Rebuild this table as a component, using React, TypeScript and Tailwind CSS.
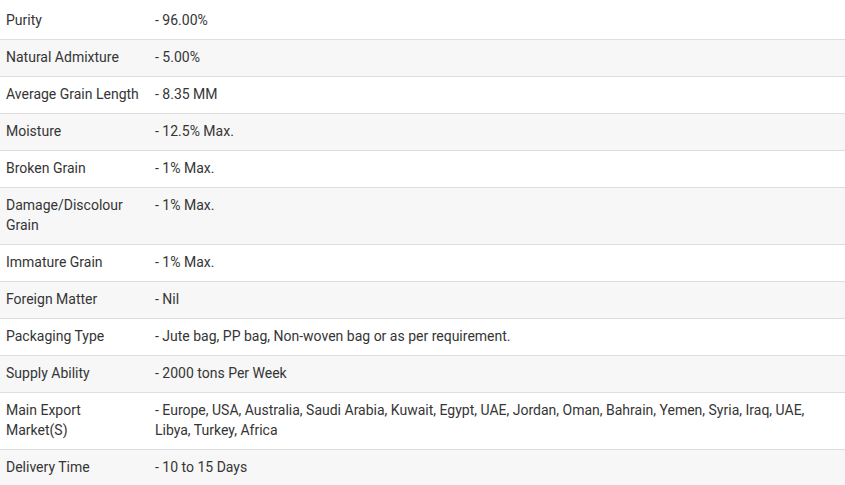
const specs: { label: string; value: string }[] = [
  { label: "Purity", value: "- 96.00%" },
  { label: "Natural Admixture", value: "- 5.00%" },
  { label: "Average Grain Length", value: "- 8.35 MM" },
  { label: "Moisture", value: "- 12.5% Max." },
  { label: "Broken Grain", value: "- 1% Max." },
  { label: "Damage/Discolour Grain", value: "- 1% Max." },
  { label: "Immature Grain", value: "- 1% Max." },
  { label: "Foreign Matter", value: "- Nil" },
  { label: "Packaging Type", value: "- Jute bag, PP bag, Non-woven bag or as per requirement." },
  { label: "Supply Ability", value: "- 2000 tons Per Week" },
  {
    label: "Main Export Market(S)",
    value:
      "- Europe, USA, Australia, Saudi Arabia, Kuwait, Egypt, UAE, Jordan, Oman, Bahrain, Yemen, Syria, Iraq, UAE, Libya, Turkey, Africa",
  },
  { label: "Delivery Time", value: "- 10 to 15 Days" },
];

export default function App() {
  return (
    <div className="w-[845px] bg-white font-['Roboto',_'Liberation_Sans',_sans-serif] text-[14px] leading-5 text-[#353535]">
      <table className="w-full border-collapse">
        <tbody>
          {specs.map((row, i) => (
            <tr
              key={row.label}
              className={`border-b border-[#dedede] ${i % 2 === 1 ? "bg-[#f7f7f7]" : "bg-white"}`}
            >
              <td
                className={`w-[149px] px-[6px] pb-[9px] align-top ${i === 0 ? "pt-[10px]" : "pt-[7px]"}`}
              >
                {row.label}
              </td>
              <td className={`px-[6px] pb-[9px] align-top ${i === 0 ? "pt-[10px]" : "pt-[7px]"}`}>
                {row.value}
              </td>
            </tr>
          ))}
        </tbody>
      </table>
    </div>
  );
}
